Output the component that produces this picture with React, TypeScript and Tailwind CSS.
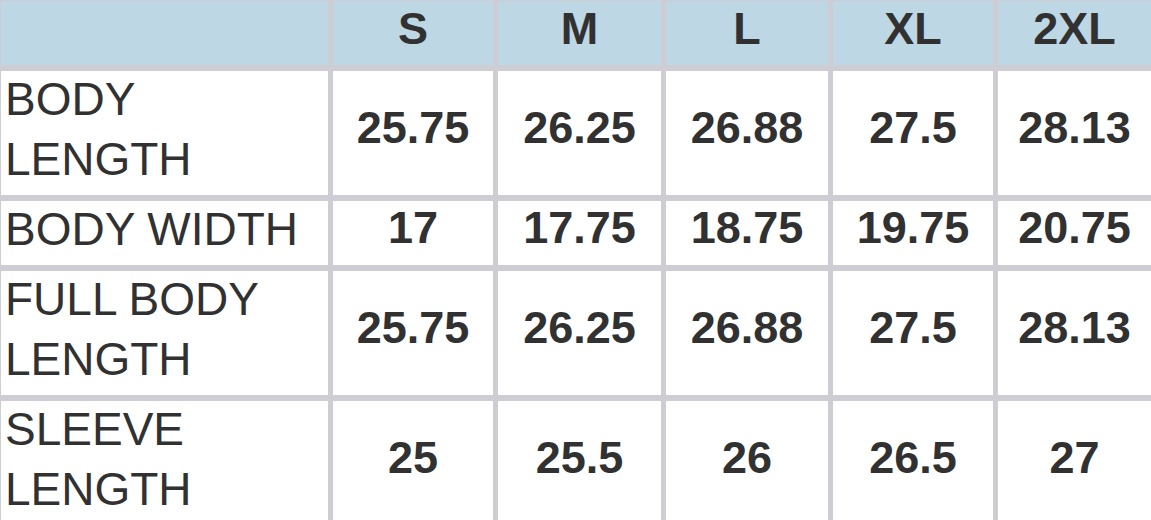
import React from 'react';

const sizes = ['S', 'M', 'L', 'XL', '2XL'];

const rows = [
  { label: ['BODY', 'LENGTH'], values: ['25.75', '26.25', '26.88', '27.5', '28.13'] },
  { label: ['BODY WIDTH'], values: ['17', '17.75', '18.75', '19.75', '20.75'] },
  { label: ['FULL BODY', 'LENGTH'], values: ['25.75', '26.25', '26.88', '27.5', '28.13'] },
  { label: ['SLEEVE', 'LENGTH'], values: ['25', '25.5', '26', '26.5', '27'] },
];

const App = () => {
  return (
    <div
      className="h-[520px] w-[1151px] overflow-hidden bg-[#cdcdd3] pl-[1px] pt-[1px] text-[#313131]"
      style={{ fontFamily: '"Liberation Sans", Arial, sans-serif' }}
    >
      <div className="grid grid-cols-[327px_160px_163px_162px_160px_1fr] grid-rows-[64px_124px_64px_124px_124px] gap-x-[5px] gap-y-[6px]">
        <div className="bg-[#bed7e5]" />
        {sizes.map((s) => (
          <div key={s} className="flex items-center justify-center bg-[#bed7e5] pb-[9px] text-[45px] font-bold">
            {s}
          </div>
        ))}

        {rows.map((row, i) => (
          <React.Fragment key={i}>
            <div className="flex flex-col justify-center bg-white pb-[9px] pl-[4px] text-[46px] leading-[60px]">
              {row.label.map((l) => (
                <span key={l}>{l}</span>
              ))}
            </div>
            {row.values.map((v, j) => (
              <div key={j} className="flex items-center justify-center bg-white pb-[10px] text-[45px] font-bold">
                {v}
              </div>
            ))}
          </React.Fragment>
        ))}
      </div>
    </div>
  );
};

export default App;
